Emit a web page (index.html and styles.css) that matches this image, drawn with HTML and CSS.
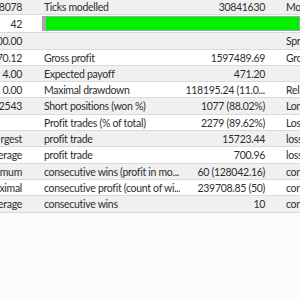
FILE: index.html
```html
<!DOCTYPE html>
<html>
<head>
<meta charset="utf-8">
<link rel="stylesheet" href="styles.css">
</head>
<body>
<div class="report">
  <div class="row shade">
    <div class="c1">18078</div><div class="c2">Ticks modelled</div><div class="c3">30841630</div><div class="c4">Mo</div>
  </div>
  <div class="row bar-row">
    <div class="c1">42</div>
    <div class="bar"><div class="bar-gray"></div><div class="bar-green"></div></div>
  </div>
  <div class="row shade">
    <div class="c1">00.00</div><div class="c2"></div><div class="c3"></div><div class="c4">Spr</div>
  </div>
  <div class="row">
    <div class="c1">70.12</div><div class="c2">Gross profit</div><div class="c3">1597489.69</div><div class="c4">Gro</div>
  </div>
  <div class="row shade">
    <div class="c1">4.00</div><div class="c2">Expected payoff</div><div class="c3">471.20</div><div class="c4"></div>
  </div>
  <div class="row">
    <div class="c1">0.00</div><div class="c2">Maximal drawdown</div><div class="c3">118195.24 (11.0...</div><div class="c4">Rel</div>
  </div>
  <div class="row shade">
    <div class="c1">2543</div><div class="c2">Short positions (won %)</div><div class="c3">1077 (88.02%)</div><div class="c4">Lon</div>
  </div>
  <div class="row">
    <div class="c1"></div><div class="c2">Profit trades (% of total)</div><div class="c3">2279 (89.62%)</div><div class="c4">Los</div>
  </div>
  <div class="row shade">
    <div class="c1">rgest</div><div class="c2">profit trade</div><div class="c3">15723.44</div><div class="c4">loss</div>
  </div>
  <div class="row">
    <div class="c1">erage</div><div class="c2">profit trade</div><div class="c3">700.96</div><div class="c4">loss</div>
  </div>
  <div class="row shade">
    <div class="c1">imum</div><div class="c2">consecutive wins (profit in mo...</div><div class="c3">60 (128042.16)</div><div class="c4">con</div>
  </div>
  <div class="row">
    <div class="c1">ximal</div><div class="c2">consecutive profit (count of wi...</div><div class="c3">239708.85 (50)</div><div class="c4">con</div>
  </div>
  <div class="row shade">
    <div class="c1">erage</div><div class="c2">consecutive wins</div><div class="c3">10</div><div class="c4">con</div>
  </div>
</div>
</body>
</html>
```

FILE: styles.css
```css
html, body {
  margin: 0;
  padding: 0;
  background: #fcfcfc;
  overflow: hidden;
}
body {
  font-family: Lato, "Noto Sans", sans-serif;
  font-size: 10.5px;
  letter-spacing: -0.3px;
  color: #2e2e2e;
}
.report {
  width: 300px;
  margin-top: -1px;
}
.row {
  display: grid;
  grid-template-columns: 40px 140px 102px 1fr;
  height: 15.3px;
  line-height: 16px;
  background: #ffffff;
  border-bottom: 1px solid #dadada;
}
.row.shade {
  background: #f0f0f0;
}
.row > div {
  white-space: nowrap;
  overflow: hidden;
  min-width: 0;
}
.c1 {
  display: flex;
  justify-content: flex-end;
  padding-right: 18px;
}
.c2 {
  padding-left: 4px;
}
.c3 {
  text-align: right;
  padding-left: 4px;
  padding-right: 17px;
}
.c4 {
  padding-left: 4px;
}
.bar-row {
  height: 17px;
  line-height: 18px;
  align-items: center;
}
.bar {
  grid-column: 2 / 5;
  margin-left: 2px;
  height: 13px;
  border: 1px solid #9aa8b0;
  display: flex;
  background: #e8e8e8;
}
.bar-gray {
  width: 3px;
  background: #a9a9a9;
}
.bar-green {
  flex: 1;
  background: #00f000;
}
```
